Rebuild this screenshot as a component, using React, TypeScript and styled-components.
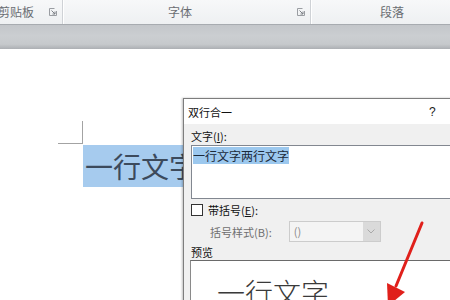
import styled, { createGlobalStyle } from "styled-components";

const GlobalStyle = createGlobalStyle`
  html, body {
    margin: 0;
    padding: 0;
    width: 450px;
    height: 300px;
    overflow: hidden;
    background: #ffffff;
    font-family: "Noto Sans CJK SC", "Liberation Sans", sans-serif;
  }
`;

const Page = styled.div`
  position: relative;
  width: 450px;
  height: 300px;
  overflow: hidden;
`;

const Ribbon = styled.div`
  display: flex;
  height: 24px;
  background: linear-gradient(#f7f8f9, #eef0f2);
  border-bottom: 1px solid #a7abb0;
`;

const Group = styled.div<{ $width?: number }>`
  display: flex;
  align-items: center;
  width: ${({ $width }) => ($width ? `${$width}px` : "auto")};
  flex: ${({ $width }) => ($width ? "none" : "1")};
  height: 100%;
`;

const GroupLabel = styled.div<{ $align: "left" | "center"; $pad?: number }>`
  flex: 1;
  text-align: ${({ $align }) => $align};
  padding-left: ${({ $pad }) => $pad ?? 0}px;
  font-size: 12px;
  line-height: 14px;
  color: #6a6d72;
  white-space: nowrap;
`;

const Separator = styled.div`
  width: 1px;
  height: 100%;
  background: #cfd2d6;
  box-shadow: 1px 0 0 #ffffff;
`;

const Launcher = styled.svg`
  width: 8px;
  height: 8px;
  margin-right: 5px;
  flex: none;
`;

const Band = styled.div`
  height: 24px;
  background: linear-gradient(#c3c6ca, #cbced1 45%, #c6c9cc 80%, #acafb3);
`;

const DocArea = styled.div`
  position: relative;
  height: 251px;
  background: #ffffff;
  padding: 72px 0 0 58px;
  box-sizing: border-box;
`;

const CornerMark = styled.div`
  width: 25px;
  height: 23px;
  box-sizing: border-box;
  border-right: 1px solid #a3a3a3;
  border-bottom: 1px solid #a3a3a3;
`;

const SelectedText = styled.div`
  display: inline-block;
  margin: 1px 0 0 25px;
  padding: 0 2px;
  height: 42px;
  font-size: 28px;
  line-height: 42px;
  color: #3c4a5c;
  background: #a6cbee;
  white-space: nowrap;
`;

const Dialog = styled.div`
  position: absolute;
  left: 183px;
  top: 49px;
  width: 290px;
  height: 230px;
  border: 1px solid #7d7d7d;
  background: #f0f0f0;
  box-shadow: -1px 0 2px rgba(0, 0, 0, 0.25);
`;

const TitleBar = styled.div`
  display: flex;
  align-items: center;
  height: 25px;
  padding-left: 4px;
  background: #ffffff;
  font-size: 11px;
  color: #111;
`;

const TitleText = styled.div`
  width: 241px;
`;

const Help = styled.div`
  font-size: 12px;
  font-family: "Liberation Sans", sans-serif;
  color: #222;
`;

const Body = styled.div`
  display: flex;
  flex-direction: column;
  padding: 5px 0 0 7px;
`;

const Label = styled.div<{ $muted?: boolean }>`
  font-size: 11px;
  line-height: 14px;
  color: ${({ $muted }) => ($muted ? "#6f6f6f" : "#111")};
  white-space: nowrap;

  u {
    text-underline-offset: 1px;
  }
`;

const TextBox = styled.div`
  margin-top: 2px;
  height: 54px;
  padding: 3px 1px;
  box-sizing: border-box;
  background: #ffffff;
  border: 1px solid #828790;
  border-right: none;
  font-size: 12px;
  line-height: 14px;
`;

const Highlight = styled.span`
  background: #9cc8ee;
  color: #1b2a3a;
`;

const CheckRow = styled.div`
  display: flex;
  align-items: center;
  gap: 5px;
  margin-top: 5px;
  height: 12px;
`;

const CheckBox = styled.div`
  width: 12px;
  height: 12px;
  box-sizing: border-box;
  border: 1px solid #333;
  background: #fff;
`;

const StyleRow = styled.div`
  display: flex;
  align-items: center;
  gap: 17px;
  margin-top: 5px;
  padding-left: 19px;
`;

const Select = styled.div`
  display: flex;
  width: 92px;
  height: 21px;
  box-sizing: border-box;
  border: 1px solid #cccccc;
  background: #f4f4f4;
`;

const SelectValue = styled.div`
  flex: 1;
  padding-left: 4px;
  font-size: 11px;
  line-height: 19px;
  color: #8a8a8a;
`;

const SelectButton = styled.div`
  display: flex;
  align-items: center;
  justify-content: center;
  width: 17px;
  background: #dadada;
`;

const PreviewLabel = styled(Label)`
  margin-top: 3px;
`;

const PreviewBox = styled.div`
  margin: 1px 0 0 -1px;
  height: 60px;
  background: #ffffff;
  border-top: 1px solid #6a6a6a;
  border-left: 1px solid #8a8a8a;
  padding: 16px 0 0 26px;
  font-size: 28px;
  line-height: 30px;
  font-weight: 300;
  color: #3a3a3a;
`;

const Arrow = styled.svg`
  position: absolute;
  left: 0;
  top: 0;
  width: 450px;
  height: 300px;
  pointer-events: none;
`;

const LauncherIcon = () => (
  <Launcher viewBox="0 0 8 8">
    <path d="M0.5 0.5 H5.5 M0.5 0.5 V7.5 H7.5 V3" stroke="#9a9da2" fill="none" strokeWidth="1" />
    <path d="M2.5 2.5 L6 6 M6 3.5 V6 H3.5" stroke="#7c8086" fill="none" strokeWidth="1" />
  </Launcher>
);

export default function App() {
  return (
    <>
      <GlobalStyle />
      <Page>
        <Ribbon>
          <Group $width={62}>
            <GroupLabel $align="left" $pad={0} style={{ marginLeft: -2 }}>
              剪贴板
            </GroupLabel>
            <LauncherIcon />
          </Group>
          <Separator />
          <Group $width={247}>
            <GroupLabel $align="center">字体</GroupLabel>
            <LauncherIcon />
          </Group>
          <Separator />
          <Group>
            <GroupLabel $align="left" $pad={69}>
              段落
            </GroupLabel>
          </Group>
        </Ribbon>
        <Band />
        <DocArea>
          <CornerMark />
          <SelectedText>一行文字</SelectedText>
          <Dialog>
            <TitleBar>
              <TitleText>双行合一</TitleText>
              <Help>?</Help>
            </TitleBar>
            <Body>
              <Label>
                文字(<u>I</u>):
              </Label>
              <TextBox>
                <Highlight>一行文字两行文字</Highlight>
              </TextBox>
              <CheckRow>
                <CheckBox />
                <Label>
                  带括号(<u>E</u>):
                </Label>
              </CheckRow>
              <StyleRow>
                <Label $muted>括号样式(B):</Label>
                <Select>
                  <SelectValue>()</SelectValue>
                  <SelectButton>
                    <svg width="8" height="5" viewBox="0 0 8 5">
                      <path d="M0.5 0.5 L4 4 L7.5 0.5" stroke="#a8a8a8" fill="none" />
                    </svg>
                  </SelectButton>
                </Select>
              </StyleRow>
              <PreviewLabel>预览</PreviewLabel>
              <PreviewBox>一行文字</PreviewBox>
            </Body>
          </Dialog>
        </DocArea>
        <Arrow viewBox="0 0 450 300">
          <line x1="422" y1="223" x2="396" y2="286" stroke="#e0201b" strokeWidth="3" strokeLinecap="round" />
          <polygon points="388,306 405,292 387,283" fill="#e0201b" />
        </Arrow>
      </Page>
    </>
  );
}
